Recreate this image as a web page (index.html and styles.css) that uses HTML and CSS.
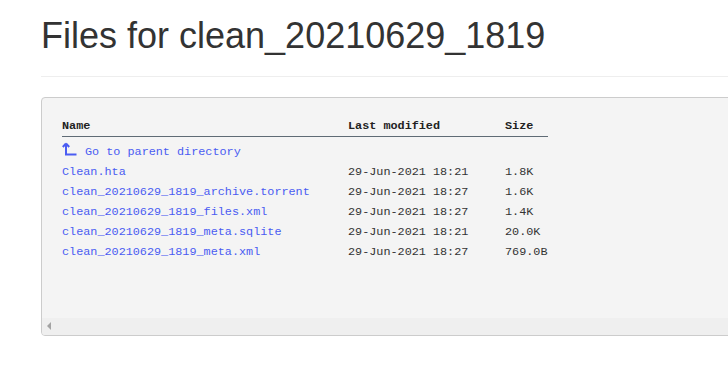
FILE: index.html
```html
<!DOCTYPE html>
<html>

<head>
  <meta charset="utf-8">
  <link rel="stylesheet" href="styles.css">
</head>

<body>
  <div class="container">
    <h1>Files for clean_20210629_1819</h1>
    <hr>

    <div class="listing">
      <div class="listing-body">
        <table class="files">
          <thead>
            <tr>
              <th class="col-name">Name</th>
              <th class="col-date">Last modified</th>
              <th class="col-size">Size</th>
            </tr>
          </thead>
          <tbody>
            <tr class="parent-row">
              <td>
                <a href="#" class="parent-link">
                  <svg class="up-icon" width="15" height="14" viewBox="0 0 15 14">
                    <path d="M4 1.5 L0.8 5 M4 1.5 L7.2 5 M4 1.5 V12.5 H14.5" fill="none" stroke="currentColor" stroke-width="2" />
                  </svg>Go to parent directory</a>
              </td>
              <td></td>
              <td></td>
            </tr>
            <tr>
              <td><a href="#">Clean.hta</a></td>
              <td>29-Jun-2021 18:21</td>
              <td>1.8K</td>
            </tr>
            <tr>
              <td><a href="#">clean_20210629_1819_archive.torrent</a></td>
              <td>29-Jun-2021 18:27</td>
              <td>1.6K</td>
            </tr>
            <tr>
              <td><a href="#">clean_20210629_1819_files.xml</a></td>
              <td>29-Jun-2021 18:27</td>
              <td>1.4K</td>
            </tr>
            <tr>
              <td><a href="#">clean_20210629_1819_meta.sqlite</a></td>
              <td>29-Jun-2021 18:21</td>
              <td>20.0K</td>
            </tr>
            <tr>
              <td><a href="#">clean_20210629_1819_meta.xml</a></td>
              <td>29-Jun-2021 18:27</td>
              <td>769.0B</td>
            </tr>
          </tbody>
        </table>
      </div>

      <!-- 横向滚动条 -->
      <div class="hscroll">
        <span class="hscroll-arrow"></span>
      </div>
    </div>
  </div>
</body>

</html>
```

FILE: styles.css
```css
/* 基础 */
html,
body {
  margin: 0;
  padding: 0;
  background: #fff;
  overflow: hidden;
}

body {
  font-family: 'Liberation Sans', Arial, sans-serif;
  color: #333;
}

.container {
  padding: 16px 0 0 41px;
  width: 1100px;
}

/* 标题 */
h1 {
  margin: 0;
  font-size: 36px;
  line-height: 39.6px;
  font-weight: normal;
  color: #333;
}

hr {
  margin: 20px 0 20px 0;
  border: 0;
  border-top: 1px solid #eee;
  height: 0;
}

/* 文件列表框 */
.listing {
  background: #f4f4f4;
  border: 1px solid #ccc;
  border-radius: 4px;
  overflow: hidden;
}

.listing-body {
  padding: 18px 20px 56px 20px;
}

.files {
  border-collapse: collapse;
  font-family: 'Liberation Mono', 'DejaVu Sans Mono', monospace;
  font-size: 11.8px;
  line-height: 20px;
  color: #333;
}

.files th {
  text-align: left;
  font-weight: bold;
  padding: 0;
  border-bottom: 1px solid #5f6b75;
  color: #222;
}

.files td {
  padding: 0;
  white-space: nowrap;
  vertical-align: top;
}

.col-name {
  width: 286px;
}

.col-date {
  width: 157px;
}

.col-size {
  width: 43px;
}

/* 表头和第一行之间的间隔 */
.parent-row td {
  padding-top: 5px;
}

.files a {
  color: #4a5cf2;
  text-decoration: none;
}

.parent-link {
  display: block;
  height: 20px;
}

.up-icon {
  margin-right: 8px;
  vertical-align: -1px;
}

/* 滚动条 */
.hscroll {
  height: 17px;
  background: #efefef;
  display: flex;
  align-items: center;
  padding-left: 5px;
}

.hscroll-arrow {
  width: 0;
  height: 0;
  border-top: 4px solid transparent;
  border-bottom: 4px solid transparent;
  border-right: 4px solid #a3a3a3;
}
```
